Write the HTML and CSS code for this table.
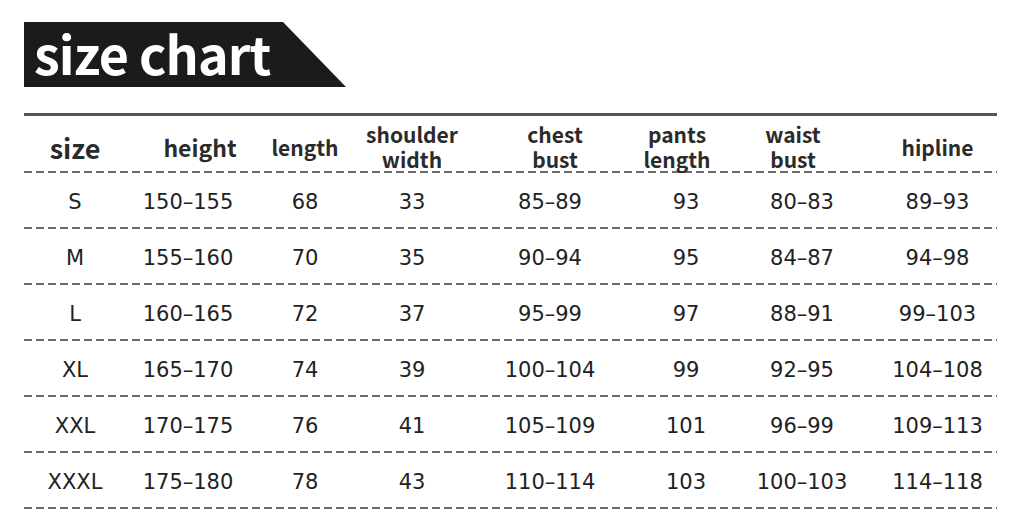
FILE: index.html
```html
<!DOCTYPE html>
<html>
<head>
<meta charset="utf-8">
<link rel="stylesheet" href="styles.css">
</head>
<body>
<div class="banner"><h1 class="title">size chart</h1></div>
<div class="chart">
  <div class="row head">
    <div class="cell big">size</div>
    <div class="cell mid sh-r12">height</div>
    <div class="cell">length</div>
    <div class="cell two"><span>shoulder</span><span>width</span></div>
    <div class="cell two sh-r10"><span>chest</span><span>bust</span></div>
    <div class="cell two sh-l9"><span>pants</span><span>length</span></div>
    <div class="cell two sh-l9"><span>waist</span><span>bust</span></div>
    <div class="cell sh-r10">hipline</div>
  </div>
  <div class="row data">
    <div class="cell">S</div><div class="cell">150–155</div><div class="cell">68</div><div class="cell">33</div><div class="cell">85–89</div><div class="cell">93</div><div class="cell">80–83</div><div class="cell sh-r10">89–93</div>
  </div>
  <div class="row data">
    <div class="cell">M</div><div class="cell">155–160</div><div class="cell">70</div><div class="cell">35</div><div class="cell">90–94</div><div class="cell">95</div><div class="cell">84–87</div><div class="cell sh-r10">94–98</div>
  </div>
  <div class="row data">
    <div class="cell">L</div><div class="cell">160–165</div><div class="cell">72</div><div class="cell">37</div><div class="cell">95–99</div><div class="cell">97</div><div class="cell">88–91</div><div class="cell sh-r10">99–103</div>
  </div>
  <div class="row data">
    <div class="cell">XL</div><div class="cell">165–170</div><div class="cell">74</div><div class="cell">39</div><div class="cell">100–104</div><div class="cell">99</div><div class="cell">92–95</div><div class="cell sh-r10">104–108</div>
  </div>
  <div class="row data">
    <div class="cell">XXL</div><div class="cell">170–175</div><div class="cell">76</div><div class="cell">41</div><div class="cell">105–109</div><div class="cell">101</div><div class="cell">96–99</div><div class="cell sh-r10">109–113</div>
  </div>
  <div class="row data">
    <div class="cell">XXXL</div><div class="cell">175–180</div><div class="cell">78</div><div class="cell">43</div><div class="cell">110–114</div><div class="cell">103</div><div class="cell">100–103</div><div class="cell sh-r10">114–118</div>
  </div>
</div>
</body>
</html>
```
FILE: styles.css
```css
html, body {
  margin: 0;
  padding: 0;
  background: #ffffff;
}
body {
  padding-top: 22px;
  font-family: "DejaVu Sans", sans-serif;
}
.banner {
  margin-left: 24px;
  width: 322px;
  height: 65px;
  background: #1b1b1b;
  clip-path: polygon(0 0, 259px 0, 100% 100%, 0 100%);
  display: flex;
  align-items: center;
}
.title {
  margin: 0;
  padding-left: 10px;
  color: #ffffff;
  font-family: "Noto Sans CJK SC", "Noto Sans", sans-serif;
  font-weight: 700;
  font-size: 52px;
  line-height: 1;
  letter-spacing: -0.9px;
  position: relative;
  top: -2px;
}
.chart {
  margin: 26px 0 0 24px;
  width: 973px;
  border-top: 3px solid #555555;
}
.row {
  display: grid;
  grid-template-columns: 102px 124px 110px 104px 172px 100px 132px 129px;
  height: 56px;
  background-image: repeating-linear-gradient(to right, #6a6a6a 0 8px, transparent 8px 12px);
  background-size: 100% 2px;
  background-position: left bottom;
  background-repeat: no-repeat;
}
.row.head {
  height: 57px;
}
.cell {
  display: flex;
  align-items: center;
  justify-content: center;
  text-align: center;
}
.head .cell {
  font-family: "Noto Sans CJK SC", "Noto Sans", sans-serif;
  font-weight: 700;
  font-size: 21px;
  line-height: 25px;
  color: #2b2b2b;
  padding-top: 5px;
}
.head .cell.two {
  flex-direction: column;
}
.head .cell.two span {
  display: block;
  height: 25px;
}
.head .cell.big {
  font-size: 27px;
}
.head .cell.mid {
  font-size: 23px;
}
.data .cell {
  font-size: 21px;
  color: #222222;
  padding-top: 2px;
}
.sh-r12 { padding-left: 24px; }
.sh-r10 { padding-left: 10px; }
.sh-l9 { padding-right: 18px; }
```
